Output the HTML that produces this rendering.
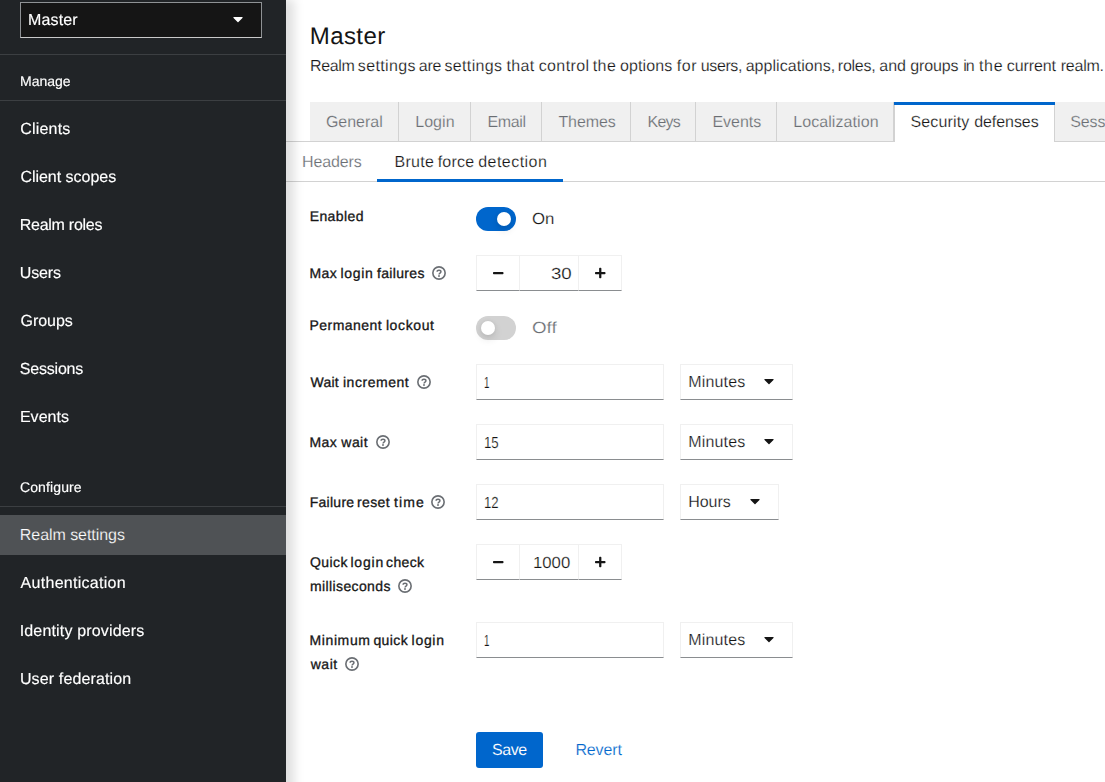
<!DOCTYPE html>
<html lang="en">
<head>
<meta charset="utf-8">
<title>Keycloak Administration Console</title>
<style>
*{box-sizing:border-box;margin:0;padding:0}
html,body{width:1105px;height:782px;overflow:hidden;background:#fff}
body{font-family:"Liberation Sans",sans-serif;font-size:16px;color:#151515;position:relative;text-rendering:geometricPrecision}
a{text-decoration:none;color:inherit}
ul{list-style:none}
.x{position:absolute;display:block;height:40px;line-height:40px;white-space:nowrap;font-weight:400;-webkit-text-stroke:.2px #fff}
#sidebar .x{will-change:transform;-webkit-text-stroke:.15px #fff}
#sidebar .x.cur{will-change:auto;-webkit-text-stroke:.2px #4f5255}
.tabs li .x{-webkit-text-stroke-color:#f0f0f0}
.tabs li.cur .x{-webkit-text-stroke-color:#fff}
.btn .x{-webkit-text-stroke:.08px #06c}
.ic{position:absolute;display:block;overflow:visible}
#sidebar{position:absolute;left:0;top:0;width:286px;height:782px;background:#212427;color:#fff;z-index:2}
#sidebar:before{content:"";position:absolute;left:0;top:-5px;width:286px;height:830px;box-shadow:12px 0 10px -4px rgba(3,3,3,.13);z-index:-1}
.realm{position:absolute;left:20px;top:2px;width:242px;height:36px;background:#151515;border:1px solid #8f9295;border-bottom-color:#c9c9c9}
.hr{position:absolute;left:0;width:286px;height:1px;background:#3c3f42}
.sect{font-size:14px}
.nav a{left:0;width:286px;color:#fff}
.nav a.cur{background:#4f5255}
#main{position:absolute;left:286px;top:0;width:819px;height:782px;background:#fff;overflow:hidden}
h1.x{font-size:24px;-webkit-text-stroke-width:0}
.tabs{position:absolute;left:0;top:102px;width:819px;height:40px;border-bottom:1px solid #d2d2d2}
.tabs li{position:absolute;top:0;height:40px;background:#f0f0f0;border-right:1px solid #d2d2d2;border-bottom:1px solid #d2d2d2;color:#6a6e73}
.tabs li.cur{background:#fff;color:#151515;border-left:1px solid #d2d2d2;border-bottom:0}
.tabs li.cur:before{content:"";position:absolute;left:-1px;right:-1px;top:0;height:3px;background:#06c}
.sub{position:absolute;left:0;top:142px;width:819px;height:40px;border-bottom:1px solid #d2d2d2;color:#6a6e73}
.sub li{position:absolute;top:0;height:40px}
.sub li.cur{color:#151515;border-bottom:3px solid #06c}
label.l{display:block}
label.l .x{font-size:14px;font-weight:400;-webkit-text-stroke:.3px #151515}
.sw{position:absolute;left:190px;width:40px;height:24px;border-radius:24px;background:#06c}
.sw i{position:absolute;left:21px;top:5px;width:14px;height:14px;border-radius:50%;background:#fff;box-shadow:0 4px 8px 0 rgba(3,3,3,.12),0 0 4px 0 rgba(3,3,3,.06)}
.sw.off{background:#d2d2d2}
.sw.off i{left:5px}
.g{color:#6a6e73}
.ctl{position:absolute;height:36px;background:#fff;border:1px solid #f0f0f0;border-bottom-color:#8a8d90}
.btn{position:absolute;left:190px;top:732px;width:67px;height:36px;background:#06c;border-radius:3px}
.w{color:#fff}
.b{color:#06c}
</style>
</head>
<body>
<aside id="sidebar">
 <div class="realm"><span class="x" style="left:6.66px;top:-2px;letter-spacing:0.14px">Master</span><svg class="ic" style="left:212px;top:7.6px" width="10" height="16" viewBox="0 0 320 512"><path fill="#fff" d="M31.3 192h257.3c17.8 0 26.7 21.5 14.1 34.1L174.1 354.8c-7.8 7.8-20.5 7.8-28.3 0L17.2 226.1C4.6 213.5 13.5 192 31.3 192z"/></svg></div>
 <div class="hr" style="top:54px"></div>
 <h2 class="x sect" style="left:19.84px;top:61px;letter-spacing:-0.01px">Manage</h2>
 <div class="hr" style="top:100px"></div>
 <nav class="nav">
  <a class="x" style="top:109px;padding-left:20.3px;padding-top:1px;letter-spacing:0.19px">Clients</a>
  <a class="x" style="top:157px;padding-left:20.4px;padding-top:1px;letter-spacing:-0.02px">Client scopes</a>
  <a class="x" style="top:205px;padding-left:19.71px;padding-top:1px;letter-spacing:-0.26px">Realm roles</a>
  <a class="x" style="top:253px;padding-left:19.8px;padding-top:1px;letter-spacing:-0.17px">Users</a>
  <a class="x" style="top:301px;padding-left:20.47px;padding-top:1px;letter-spacing:-0.02px">Groups</a>
  <a class="x" style="top:349px;padding-left:19.75px;padding-top:1px;letter-spacing:-0.2px">Sessions</a>
  <a class="x" style="top:397px;padding-left:19.92px;padding-top:1px;letter-spacing:0.03px">Events</a>
 </nav>
 <h2 class="x sect" style="left:20.44px;top:467px;letter-spacing:0.11px">Configure</h2>
 <div class="hr" style="top:506px"></div>
 <nav class="nav">
  <a class="x cur" style="top:515px;padding-left:19.79px;padding-top:1px;letter-spacing:-0.05px">Realm settings</a>
  <a class="x" style="top:563px;padding-left:20.62px;padding-top:1px;letter-spacing:0.28px">Authentication</a>
  <a class="x" style="top:611px;padding-left:19.63px;padding-top:1px;letter-spacing:0.17px">Identity providers</a>
  <a class="x" style="top:659px;padding-left:19.94px;padding-top:1px;letter-spacing:0.13px">User federation</a>
 </nav>
</aside>
<main id="main">
 <h1 class="x" style="left:23.81px;top:17px;letter-spacing:0.41px">Master</h1>
 <p class="desc"><span class="x" style="left:23.98px;top:47px;letter-spacing:-0.35px">Realm</span> <span class="x" style="left:71.8px;top:47px;letter-spacing:0.35px">settings</span> <span class="x" style="left:132.82px;top:47px;letter-spacing:-0.31px">are</span> <span class="x" style="left:158.5px;top:47px;letter-spacing:0.34px">settings</span> <span class="x" style="left:220.51px;top:47px;letter-spacing:0.31px">that</span> <span class="x" style="left:252.71px;top:47px;letter-spacing:0.38px">control</span> <span class="x" style="left:306.76px;top:47px;letter-spacing:0.4px">the</span> <span class="x" style="left:333.93px;top:47px;letter-spacing:0.14px">options</span> <span class="x" style="left:390.69px;top:47px;letter-spacing:0.64px">for</span> <span class="x" style="left:414.82px;top:47px;letter-spacing:-0.4px">users,</span> <span class="x" style="left:459.65px;top:47px;letter-spacing:0.05px">applications,</span> <span class="x" style="left:551.85px;top:47px;letter-spacing:-0.26px">roles,</span> <span class="x" style="left:593.28px;top:47px;letter-spacing:-0.03px">and</span> <span class="x" style="left:624.2px;top:47px;letter-spacing:-0.12px">groups</span> <span class="x" style="left:677.22px;top:47px;letter-spacing:-1.03px">in</span> <span class="x" style="left:692.9px;top:47px;letter-spacing:0.78px">the</span> <span class="x" style="left:720.82px;top:47px;letter-spacing:-0.1px">current</span> <span class="x" style="left:774.75px;top:47px;letter-spacing:-0.24px">realm.</span></p>
 <div class="tabs"><ul>
  <li style="left:24px;width:89px"><span class="x" style="left:15.89px;top:1px">General</span></li>
  <li style="left:113px;width:72px"><span class="x" style="left:16.18px;top:1px;letter-spacing:0.07px">Login</span></li>
  <li style="left:185px;width:71px"><span class="x" style="left:16.44px;top:1px;letter-spacing:-0.35px">Email</span></li>
  <li style="left:256px;width:89px"><span class="x" style="left:16.43px;top:1px;letter-spacing:-0.09px">Themes</span></li>
  <li style="left:345px;width:65px"><span class="x" style="left:16.54px;top:1px;letter-spacing:-0.81px">Keys</span></li>
  <li style="left:410px;width:81px"><span class="x" style="left:16.38px;top:1px;letter-spacing:-0.01px">Events</span></li>
  <li style="left:491px;width:117px"><span class="x" style="left:16.27px;top:1px;letter-spacing:0.07px">Localization</span></li>
  <li class="cur" style="left:608px;width:161px"><span class="x" style="left:15.43px;top:1px;letter-spacing:0.15px">Security</span> <span class="x" style="left:79.16px;top:1px;letter-spacing:-0.06px">defenses</span></li>
  <li style="left:769px;width:125px"><span class="x" style="left:15.35px;top:1px;letter-spacing:-0.15px">Sessions</span></li>
 </ul></div>
 <div class="sub"><ul>
  <li style="left:0;width:91px"><span class="x" style="left:15.96px;top:1px;letter-spacing:-0.1px">Headers</span></li>
  <li class="cur" style="left:91px;width:186px"><span class="x" style="left:17.45px;top:1px;letter-spacing:0.3px">Brute</span> <span class="x" style="left:60.68px;top:1px;letter-spacing:0.2px">force</span> <span class="x" style="left:101.15px;top:1px;letter-spacing:0.47px">detection</span></li>
 </ul></div>
 <form>
  <label class="l"><span class="x" style="left:23.65px;top:196px;letter-spacing:0.42px">Enabled</span></label>
  <span class="sw" style="top:207px"><i></i></span><span class="x" style="left:245.81px;top:200px;transform-origin:0 0;transform:scaleX(1.052)">On</span>
  <label class="l"><span class="x" style="left:23.52px;top:253px;letter-spacing:0.4px">Max</span> <span class="x" style="left:54.47px;top:253px;letter-spacing:0.66px">login</span> <span class="x" style="left:91.01px;top:253px;letter-spacing:0.33px">failures</span></label><svg class="ic" style="left:146px;top:266px" width="14" height="14" viewBox="0 0 14 14"><circle cx="7" cy="7" r="6.15" fill="none" stroke="#6a6e73" stroke-width="1.6"/><path d="M5.1 5.8C5.1 4.75 5.9 4.15 7 4.15s1.95.6 1.95 1.55c0 1.3-1.9 1.4-1.9 2.7" fill="none" stroke="#6a6e73" stroke-width="1.45"/><circle cx="7" cy="10.05" r=".95" fill="#6a6e73"/></svg>
  <div class="ctl" style="left:190px;top:255px;width:44px;border-right:0"><svg class="ic" style="left:15.9px;top:11px" width="10.5" height="12" viewBox="0 0 448 512"><path fill="#151515" d="M416 208H32c-17.67 0-32 14.33-32 32v32c0 17.67 14.33 32 32 32h384c17.67 0 32-14.33 32-32v-32c0-17.67-14.33-32-32-32z"/></svg></div><div class="ctl" style="left:233px;top:255px;width:60px;border-right:0"><span class="x" style="left:30.74px;top:-1px;transform-origin:0 0;transform:scaleX(1.165)">30</span></div><div class="ctl" style="left:292px;top:255px;width:44px"><svg class="ic" style="left:15.7px;top:11px" width="10.5" height="12" viewBox="0 0 448 512"><path fill="#151515" d="M416 208H272V64c0-17.67-14.33-32-32-32h-32c-17.67 0-32 14.33-32 32v144H32c-17.67 0-32 14.33-32 32v32c0 17.67 14.33 32 32 32h144v144c0 17.67 14.33 32 32 32h32c17.67 0 32-14.33 32-32V304h144c17.67 0 32-14.33 32-32v-32c0-17.67-14.33-32-32-32z"/></svg></div>
  <label class="l"><span class="x" style="left:23.58px;top:305px;letter-spacing:0.44px">Permanent</span> <span class="x" style="left:99.88px;top:305px;letter-spacing:0.62px">lockout</span></label>
  <span class="sw off" style="top:316px"><i></i></span><span class="x g" style="left:246.26px;top:309px;transform-origin:0 0;transform:scaleX(1.173)">Off</span>
  <label class="l"><span class="x" style="left:24.51px;top:362px;letter-spacing:0.25px">Wait</span> <span class="x" style="left:56.95px;top:362px;letter-spacing:0.54px">increment</span></label><svg class="ic" style="left:131.2px;top:375.3px" width="14" height="14" viewBox="0 0 14 14"><circle cx="7" cy="7" r="6.15" fill="none" stroke="#6a6e73" stroke-width="1.6"/><path d="M5.1 5.8C5.1 4.75 5.9 4.15 7 4.15s1.95.6 1.95 1.55c0 1.3-1.9 1.4-1.9 2.7" fill="none" stroke="#6a6e73" stroke-width="1.45"/><circle cx="7" cy="10.05" r=".95" fill="#6a6e73"/></svg>
  <div class="ctl" style="left:190px;top:364px;width:188px"><span class="x" style="left:7.15px;top:-1px;transform-origin:0 0;transform:scaleX(0.612)">1</span></div><div class="ctl" style="left:394px;top:364px;width:113px"><span class="x" style="left:7.25px;top:-2px;letter-spacing:0.17px">Minutes</span><svg class="ic" style="left:83.1px;top:8px" width="10" height="16" viewBox="0 0 320 512"><path fill="#151515" d="M31.3 192h257.3c17.8 0 26.7 21.5 14.1 34.1L174.1 354.8c-7.8 7.8-20.5 7.8-28.3 0L17.2 226.1C4.6 213.5 13.5 192 31.3 192z"/></svg></div>
  <label class="l"><span class="x" style="left:23.52px;top:422px;letter-spacing:0.4px">Max</span> <span class="x" style="left:55.35px;top:422px;letter-spacing:0.44px">wait</span></label><svg class="ic" style="left:90.2px;top:435px" width="14" height="14" viewBox="0 0 14 14"><circle cx="7" cy="7" r="6.15" fill="none" stroke="#6a6e73" stroke-width="1.6"/><path d="M5.1 5.8C5.1 4.75 5.9 4.15 7 4.15s1.95.6 1.95 1.55c0 1.3-1.9 1.4-1.9 2.7" fill="none" stroke="#6a6e73" stroke-width="1.45"/><circle cx="7" cy="10.05" r=".95" fill="#6a6e73"/></svg>
  <div class="ctl" style="left:190px;top:424px;width:188px"><span class="x" style="left:7.33px;top:-1px;transform-origin:0 0;transform:scaleX(0.828)">15</span></div><div class="ctl" style="left:394px;top:424px;width:113px"><span class="x" style="left:7.25px;top:-2px;letter-spacing:0.17px">Minutes</span><svg class="ic" style="left:83.1px;top:8px" width="10" height="16" viewBox="0 0 320 512"><path fill="#151515" d="M31.3 192h257.3c17.8 0 26.7 21.5 14.1 34.1L174.1 354.8c-7.8 7.8-20.5 7.8-28.3 0L17.2 226.1C4.6 213.5 13.5 192 31.3 192z"/></svg></div>
  <label class="l"><span class="x" style="left:23.64px;top:482px;letter-spacing:0.29px">Failure</span> <span class="x" style="left:71.03px;top:482px;letter-spacing:0.38px">reset</span> <span class="x" style="left:108.06px;top:482px;letter-spacing:1.08px">time</span></label><svg class="ic" style="left:145.1px;top:495px" width="14" height="14" viewBox="0 0 14 14"><circle cx="7" cy="7" r="6.15" fill="none" stroke="#6a6e73" stroke-width="1.6"/><path d="M5.1 5.8C5.1 4.75 5.9 4.15 7 4.15s1.95.6 1.95 1.55c0 1.3-1.9 1.4-1.9 2.7" fill="none" stroke="#6a6e73" stroke-width="1.45"/><circle cx="7" cy="10.05" r=".95" fill="#6a6e73"/></svg>
  <div class="ctl" style="left:190px;top:484px;width:188px"><span class="x" style="left:7.27px;top:-1px;transform-origin:0 0;transform:scaleX(0.821)">12</span></div><div class="ctl" style="left:394px;top:484px;width:99px"><span class="x" style="left:7.26px;top:-2px;letter-spacing:-0.06px">Hours</span><svg class="ic" style="left:69.2px;top:8px" width="10" height="16" viewBox="0 0 320 512"><path fill="#151515" d="M31.3 192h257.3c17.8 0 26.7 21.5 14.1 34.1L174.1 354.8c-7.8 7.8-20.5 7.8-28.3 0L17.2 226.1C4.6 213.5 13.5 192 31.3 192z"/></svg></div>
  <label class="l"><span class="x" style="left:24.1px;top:542px;letter-spacing:0.39px">Quick</span> <span class="x" style="left:64.44px;top:542px;letter-spacing:0.79px">login</span> <span class="x" style="left:100.12px;top:542px;letter-spacing:0.35px">check</span> <span class="x" style="left:24px;top:566px;letter-spacing:0.38px">milliseconds</span></label><svg class="ic" style="left:112.2px;top:579.2px" width="14" height="14" viewBox="0 0 14 14"><circle cx="7" cy="7" r="6.15" fill="none" stroke="#6a6e73" stroke-width="1.6"/><path d="M5.1 5.8C5.1 4.75 5.9 4.15 7 4.15s1.95.6 1.95 1.55c0 1.3-1.9 1.4-1.9 2.7" fill="none" stroke="#6a6e73" stroke-width="1.45"/><circle cx="7" cy="10.05" r=".95" fill="#6a6e73"/></svg>
  <div class="ctl" style="left:190px;top:544px;width:44px;border-right:0"><svg class="ic" style="left:15.9px;top:11px" width="10.5" height="12" viewBox="0 0 448 512"><path fill="#151515" d="M416 208H32c-17.67 0-32 14.33-32 32v32c0 17.67 14.33 32 32 32h384c17.67 0 32-14.33 32-32v-32c0-17.67-14.33-32-32-32z"/></svg></div><div class="ctl" style="left:233px;top:544px;width:60px;border-right:0"><span class="x" style="left:12.81px;top:-1px;transform-origin:0 0;transform:scaleX(1.045)">1000</span></div><div class="ctl" style="left:292px;top:544px;width:44px"><svg class="ic" style="left:15.7px;top:11px" width="10.5" height="12" viewBox="0 0 448 512"><path fill="#151515" d="M416 208H272V64c0-17.67-14.33-32-32-32h-32c-17.67 0-32 14.33-32 32v144H32c-17.67 0-32 14.33-32 32v32c0 17.67 14.33 32 32 32h144v144c0 17.67 14.33 32 32 32h32c17.67 0 32-14.33 32-32V304h144c17.67 0 32-14.33 32-32v-32c0-17.67-14.33-32-32-32z"/></svg></div>
  <label class="l"><span class="x" style="left:23.53px;top:620px;letter-spacing:0.61px">Minimum</span> <span class="x" style="left:87.38px;top:620px;letter-spacing:0.4px">quick</span> <span class="x" style="left:125.61px;top:620px;letter-spacing:0.69px">login</span> <span class="x" style="left:24.68px;top:644px;letter-spacing:0.55px">wait</span></label><svg class="ic" style="left:59.1px;top:657.2px" width="14" height="14" viewBox="0 0 14 14"><circle cx="7" cy="7" r="6.15" fill="none" stroke="#6a6e73" stroke-width="1.6"/><path d="M5.1 5.8C5.1 4.75 5.9 4.15 7 4.15s1.95.6 1.95 1.55c0 1.3-1.9 1.4-1.9 2.7" fill="none" stroke="#6a6e73" stroke-width="1.45"/><circle cx="7" cy="10.05" r=".95" fill="#6a6e73"/></svg>
  <div class="ctl" style="left:190px;top:622px;width:188px"><span class="x" style="left:7.15px;top:-1px;transform-origin:0 0;transform:scaleX(0.612)">1</span></div><div class="ctl" style="left:394px;top:622px;width:113px"><span class="x" style="left:7.25px;top:-2px;letter-spacing:0.17px">Minutes</span><svg class="ic" style="left:83.1px;top:8px" width="10" height="16" viewBox="0 0 320 512"><path fill="#151515" d="M31.3 192h257.3c17.8 0 26.7 21.5 14.1 34.1L174.1 354.8c-7.8 7.8-20.5 7.8-28.3 0L17.2 226.1C4.6 213.5 13.5 192 31.3 192z"/></svg></div>
  <div class="btn"><span class="x w" style="left:16.12px;top:-1px;letter-spacing:-0.44px">Save</span></div><a class="x b" style="left:289.42px;top:731px;letter-spacing:-0.14px">Revert</a>
 </form>
</main>
</body>
</html>
